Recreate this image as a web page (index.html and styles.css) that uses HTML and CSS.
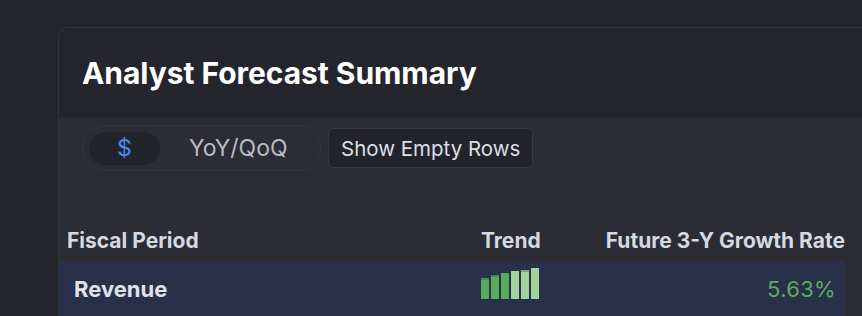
FILE: index.html
```html
<!DOCTYPE html>
<html>

<head>
  <title>Analyst Forecast Summary</title>
  <meta name="viewport" content="width=device-width, initial-scale=1.0">
  <link rel="stylesheet" href="styles.css">
</head>

<body>
  <div class="card">
    <div class="card-header">
      <h1>Analyst Forecast Summary</h1>
    </div>

    <div class="card-body">
      <div class="toolbar">
        <div class="toggle">
          <button class="toggle-item active">$</button>
          <button class="toggle-item">YoY/QoQ</button>
        </div>
        <button class="btn">Show Empty Rows</button>
      </div>

      <table class="forecast">
        <colgroup>
          <col class="col-period">
          <col class="col-trend">
          <col class="col-growth">
        </colgroup>
        <tr class="head">
          <th class="period">Fiscal Period</th>
          <th>Trend</th>
          <th class="growth">Future 3-Y Growth Rate</th>
        </tr>
        <tr class="row-highlight">
          <td class="period label">Revenue</td>
          <td>
            <div class="bars">
              <span class="bar dark capped" style="height: 21px"></span>
              <span class="bar dark capped" style="height: 24px"></span>
              <span class="bar dark" style="height: 26px"></span>
              <span class="bar light" style="height: 28px"></span>
              <span class="bar light capped" style="height: 29px"></span>
              <span class="bar light" style="height: 31px"></span>
            </div>
          </td>
          <td class="growth positive">5.63%</td>
        </tr>
      </table>
    </div>
  </div>
</body>

</html>
```

FILE: styles.css
```css
html,
body {
  margin: 0;
  height: 100%;
  overflow: hidden;
}

body {
  font-family: Inter, "Noto Sans", sans-serif;
  background-color: #23242c;
  padding: 27px 0 0 58px;
  box-sizing: border-box;
}

.card {
  width: 900px;
  border: 1px solid #33343d;
  border-right: none;
  border-radius: 10px 0 0 0;
  background-color: #2b2c35;
  overflow: hidden;
}

.card-header {
  height: 90px;
  display: flex;
  align-items: center;
  padding-left: 23px;
  background-color: #24252d;
}

h1 {
  margin: 0;
  font-size: 30px;
  font-weight: 700;
  color: #fff;
  letter-spacing: -0.05px;
}

.toolbar {
  display: flex;
  align-items: center;
  gap: 7px;
  padding: 7px 0 0 23px;
  height: 46px;
}

.toggle {
  display: flex;
  align-items: center;
  width: 239px;
  height: 46px;
  padding: 0 6px;
  border: 1px solid #363741;
  border-radius: 23px;
  box-sizing: border-box;
}

.toggle-item {
  border: none;
  background: none;
  font-family: inherit;
  font-size: 23px;
  color: #b8bbc5;
  height: 33px;
  border-radius: 17px;
  padding: 0;
  cursor: pointer;
}

.toggle-item.active {
  width: 71px;
  background-color: #22232b;
  color: #4a8cf0;
}

.toggle-item + .toggle-item {
  margin-left: 29px;
}

.btn {
  height: 40px;
  padding: 0 12px;
  font-family: inherit;
  font-size: 20.5px;
  color: #dcdfe6;
  background-color: #22232b;
  border: 1px solid #363741;
  border-radius: 5px;
  cursor: pointer;
}

.forecast {
  margin-top: 48px;
  width: 786px;
  border-collapse: collapse;
  table-layout: fixed;
  white-space: nowrap;
}

.col-period {
  width: 422px;
}

.col-trend {
  width: 110px;
}

.forecast th {
  height: 42px;
  padding: 0;
  font-size: 21px;
  font-weight: 700;
  color: #d6d9e1;
  text-align: left;
}

.forecast td {
  height: 56px;
  padding: 0;
}

.row-highlight {
  background-color: #293049;
}

th.period {
  padding-left: 8px;
}

td.period {
  padding-left: 15px;
}

.forecast th.growth {
  text-align: right;
}

.forecast td.growth {
  text-align: right;
  padding-right: 9px;
}

.label {
  font-size: 22px;
  font-weight: 700;
  color: #dfe2ea;
}

.positive {
  font-size: 22px;
  color: #5aad5e;
  letter-spacing: 0.3px;
}

.bars {
  display: flex;
  align-items: flex-end;
  gap: 2px;
  height: 31px;
  margin-bottom: 11px;
}

.bar {
  display: block;
  width: 8px;
  box-sizing: border-box;
}

.bar.dark {
  background-color: #58ab5c;
}

.bar.light {
  background-color: #a2d39b;
}

.bar.dark.capped {
  border-top: 2px solid #4a8a50;
}

.bar.light.capped {
  border-top: 2px solid #7fa57c;
}
```
